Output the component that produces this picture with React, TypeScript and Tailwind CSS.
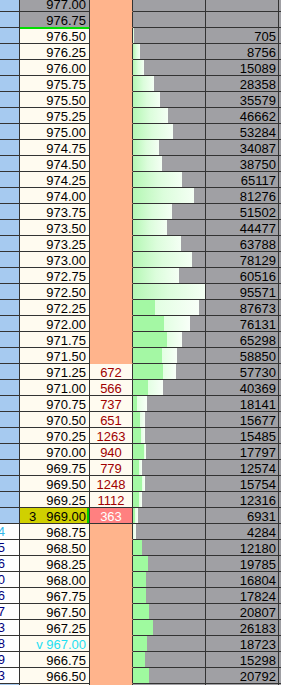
import React from 'react';

// volumes top to bottom, 977.00 -> 966.25
const vols = [
  0, 0, 705, 8756, 15089, 28358, 35579, 46662, 53284, 34087, 38750, 65117, 81276, 51502, 44477,
  63788, 78129, 60516, 95571, 87673, 76131, 65298, 58850, 57730, 40369, 18141, 15677, 15485,
  17797, 12574, 15754, 12316, 6931, 4284, 12180, 19785, 16804, 17824, 20807, 26183, 18723, 15298,
  20792, 0,
];

const bids: Record<number, number> = {
  23: 672, 24: 566, 25: 737, 26: 651, 27: 1263, 28: 940, 29: 779, 30: 1248, 31: 1112, 32: 363,
};

// solid green part of the split bars
const split: Record<number, number> = {
  19: 22, 20: 31, 21: 34, 22: 29, 23: 30, 24: 15, 25: 4, 26: 7, 27: 8, 28: 11, 29: 6, 30: 9,
  31: 6, 32: 2, 33: 0,
};

const lefts: Record<number, string> = {
  33: '14', 34: '25', 35: '36', 36: '40', 37: '16', 38: '27', 39: '33', 40: '18', 41: '29', 42: '33',
};

const MAX = 95571;

const Bar = ({ i, v }: { i: number; v: number }) => {
  const w = Math.round((v / MAX) * 72);
  if (!v) return null;
  if (i <= 18) {
    return (
      <div
        className="h-full bg-linear-to-r from-[#b4f7b4] via-[#dcfddc] to-[#f4fff4]"
        style={{ width: w }}
      />
    );
  }
  if (i in split) {
    const g = Math.min(split[i], w);
    return (
      <div className="flex h-full">
        <div className="h-full bg-[#a4f8a4]" style={{ width: g }} />
        <div className="h-full bg-linear-to-r from-[#e2ffe2] to-[#f8fff8]" style={{ width: w - g }} />
      </div>
    );
  }
  return <div className="h-full bg-[#9ffa9f]" style={{ width: w }} />;
};

const Row = ({ i }: { i: number }) => {
  const price = (977 - i * 0.25).toFixed(2);
  const v = vols[i];
  const bid = bids[i];
  const left = lefts[i];
  const top = i < 2;
  const last = i === 32;

  let priceCls = 'bg-[#fffbf0] text-black';
  if (top) priceCls = 'bg-[#a0a0a4] text-black';
  if (last) priceCls = 'bg-[#d0d000] text-black shadow-[inset_-2px_0_0_#00cc00]';
  if (i === 2) priceCls += ' shadow-[inset_0_1px_0_#00dd00]';

  let bidCls = 'bg-[#ffb48c] border-[#ffb48c]';
  if (bid) bidCls = 'bg-[#fffbf0] border-[#333] text-[#a00000]';
  if (last) bidCls = 'bg-[#ff8080] border-[#333] text-white';

  return (
    <div className="flex h-4 leading-[15px]">
      <div
        className={`w-[20px] shrink-0 overflow-hidden border-r border-b border-[#333] flex justify-end pr-[14px] ${
          left ? 'bg-white' : 'bg-[#a6caf0]'
        } ${i === 33 ? 'text-[#33b8ec]' : 'text-[#000080]'}`}
      >
        {left && <span className="whitespace-nowrap">{left}</span>}
      </div>
      <div
        className={`w-[70px] shrink-0 border-r border-b flex justify-end items-center gap-[10px] pr-[3px] pt-[1px] ${priceCls} ${
          i === 1 ? 'border-r-[#333] border-b-[#00dd00]' : 'border-[#333]'
        }`}
      >
        {last && <span>3</span>}
        {i === 40 ? <span className="text-[#1ee0f2]">v 967.00</span> : <span>{price}</span>}
      </div>
      <div className={`w-[43px] shrink-0 border-b border-r border-r-[#333] text-center pt-[1px] ${bidCls}`}>
        {bid}
      </div>
      <div className="w-[73px] shrink-0 border-r border-b border-[#333] bg-[#a0a0a4] overflow-hidden">
        <Bar i={i} v={v} />
      </div>
      <div className="w-[73px] shrink-0 border-r border-b border-[#333] bg-[#a0a0a4] text-right pr-[2px] pt-[1px] text-black">
        {v ? v : ''}
      </div>
      <div className="flex-1 border-b border-[#333] bg-[#a0a0a4]" />
    </div>
  );
};

export default function App() {
  return (
    <div className="h-[685px] w-[281px] overflow-hidden bg-[#a0a0a4] font-['Liberation_Sans',Arial,sans-serif] text-[13px]">
      <div className="mt-[-4px]">
        {vols.map((_, i) => (
          <Row key={i} i={i} />
        ))}
      </div>
    </div>
  );
}
